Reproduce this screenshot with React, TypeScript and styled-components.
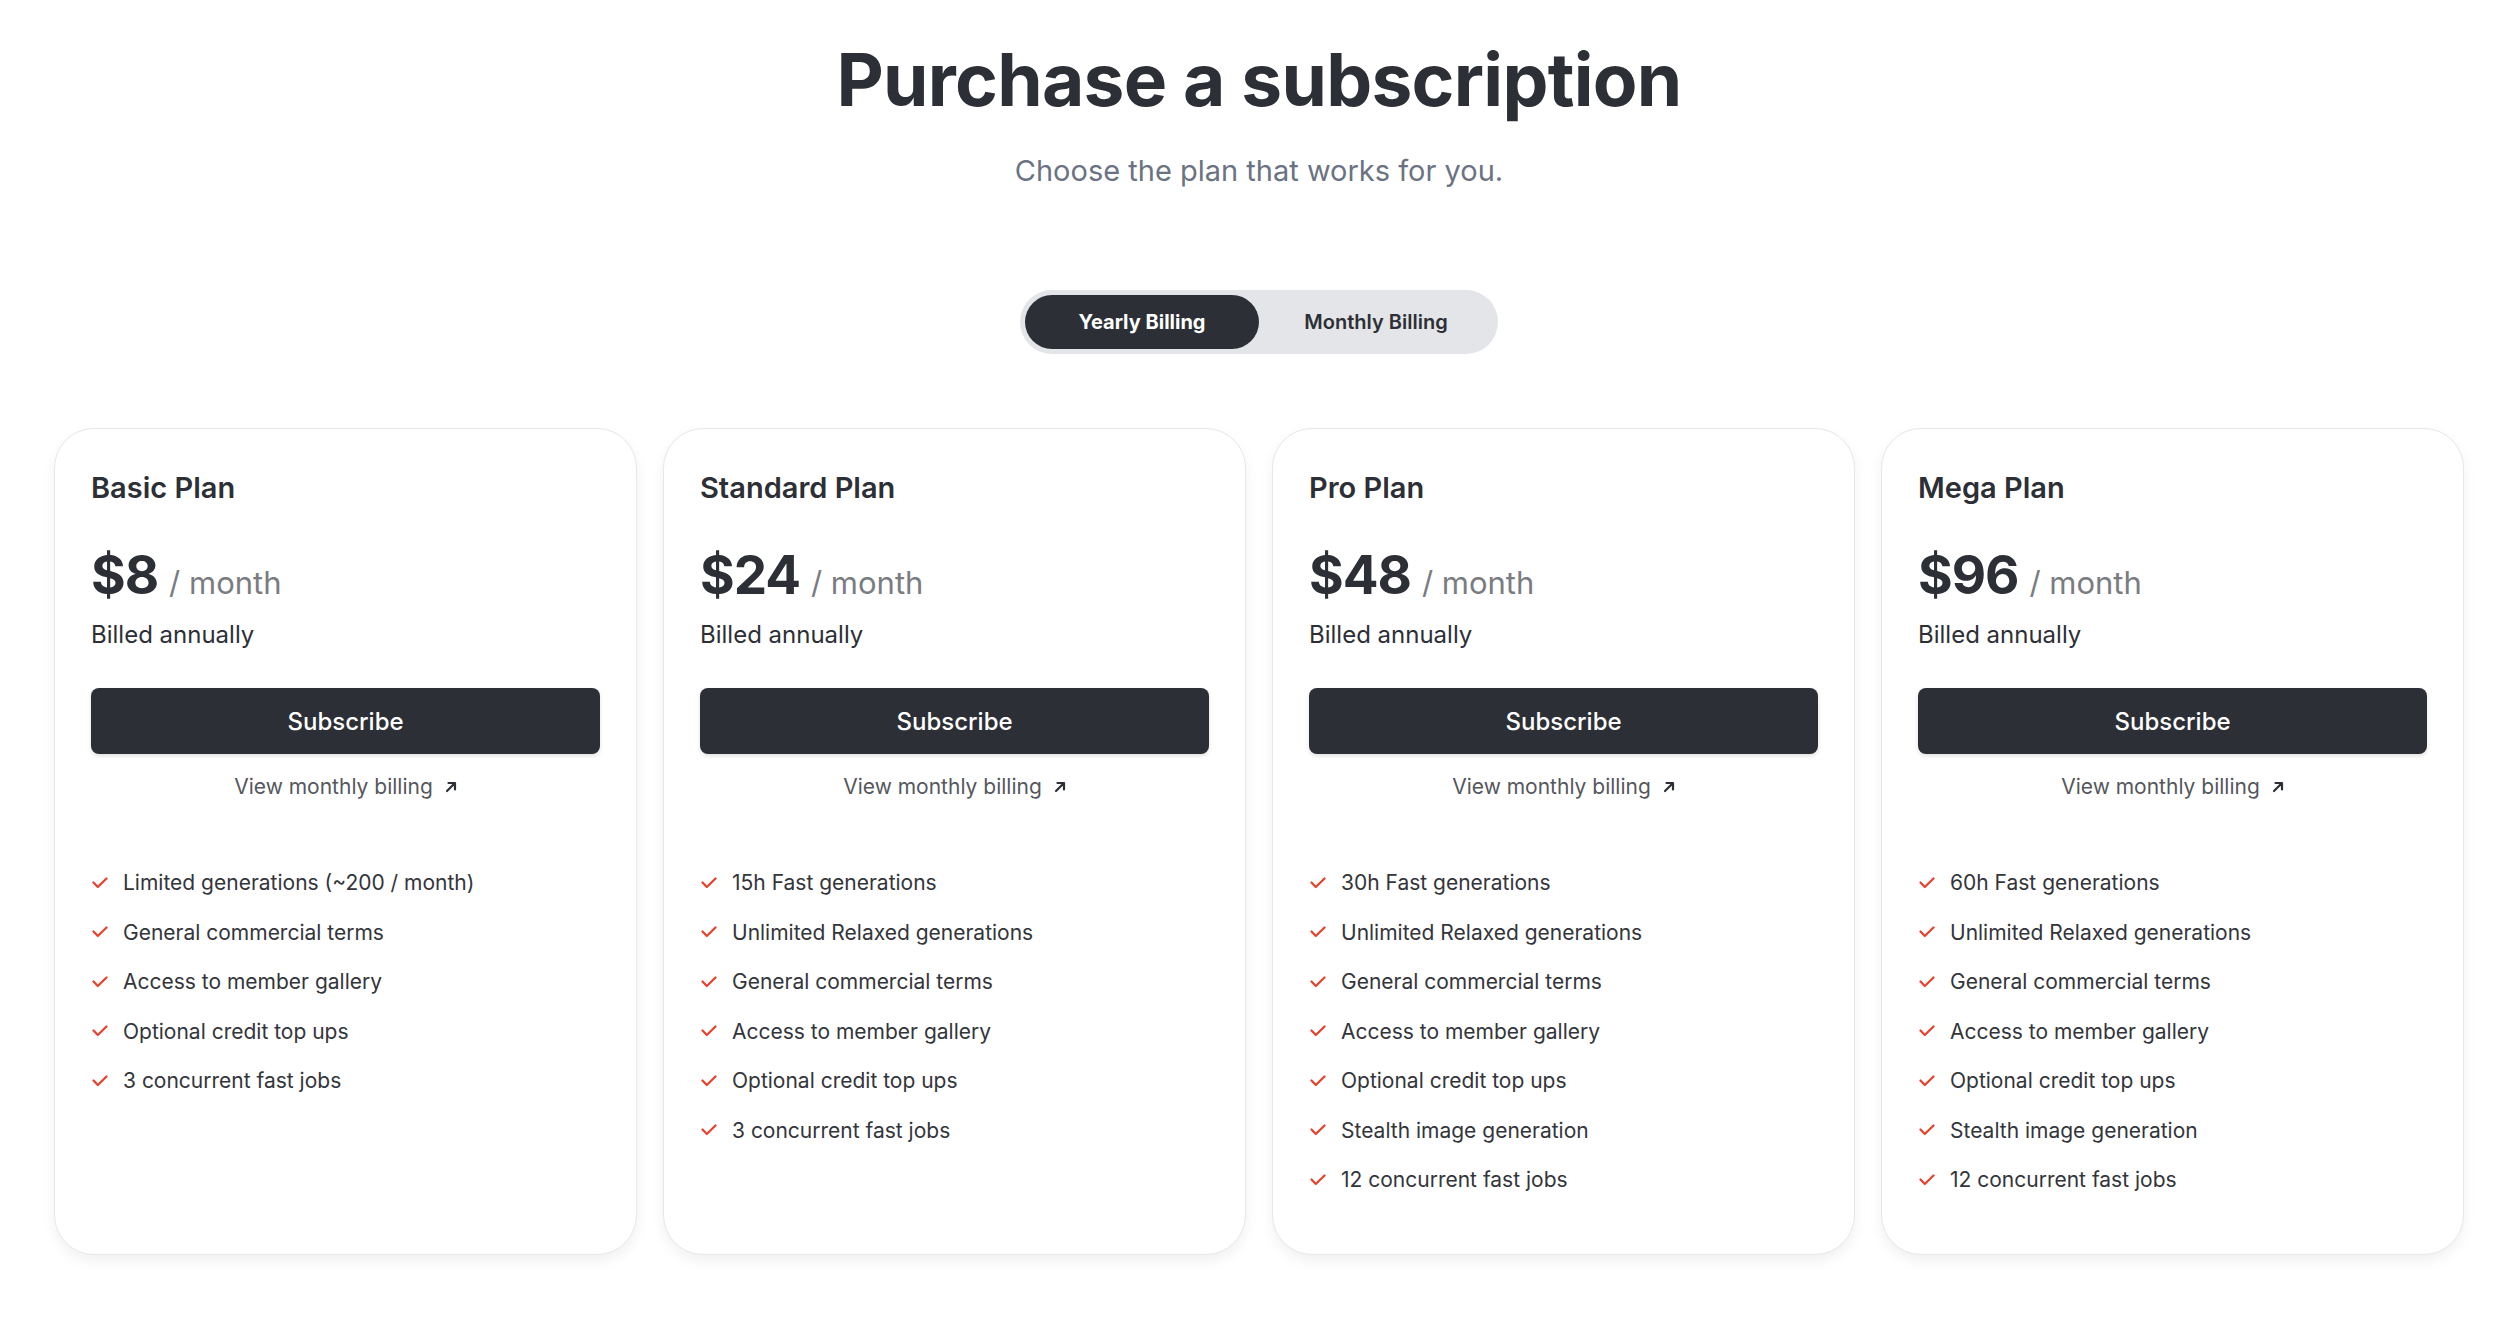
import React from 'react'
import styled, { createGlobalStyle } from 'styled-components'

const GlobalStyle = createGlobalStyle`
    * { box-sizing: border-box; }
    body {
        margin: 0;
        background: #ffffff;
        font-family: Inter, "Noto Sans", sans-serif;
        color: #2d2f36;
    }
`

type Plan = {
    name: string
    price: number
    features: string[]
}

const common = ['General commercial terms', 'Access to member gallery', 'Optional credit top ups']

const plans: Plan[] = [
    {
        name: 'Basic Plan',
        price: 8,
        features: ['Limited generations (~200 / month)', ...common, '3 concurrent fast jobs'],
    },
    {
        name: 'Standard Plan',
        price: 24,
        features: ['15h Fast generations', 'Unlimited Relaxed generations', ...common, '3 concurrent fast jobs'],
    },
    {
        name: 'Pro Plan',
        price: 48,
        features: [
            '30h Fast generations',
            'Unlimited Relaxed generations',
            ...common,
            'Stealth image generation',
            '12 concurrent fast jobs',
        ],
    },
    {
        name: 'Mega Plan',
        price: 96,
        features: [
            '60h Fast generations',
            'Unlimited Relaxed generations',
            ...common,
            'Stealth image generation',
            '12 concurrent fast jobs',
        ],
    },
]

const CheckIcon = () => (
    <svg width="16" height="12" viewBox="0 0 16 12" fill="none">
        <path d="M1.5 5.5 L5.8 10 L14.5 1.5" stroke="currentColor" strokeWidth="2.2" strokeLinecap="round" strokeLinejoin="round" />
    </svg>
)

const ArrowIcon = () => (
    <svg width="12" height="12" viewBox="0 0 12 12" fill="none">
        <path d="M2 10 L9.5 2.5 M3.5 2 H10 V8.5" stroke="currentColor" strokeWidth="2.2" strokeLinecap="round" strokeLinejoin="round" />
    </svg>
)

const App = () => {
    return (
        <Page>
            <GlobalStyle />
            <Title>Purchase a subscription</Title>
            <Subtitle>Choose the plan that works for you.</Subtitle>
            <Toggle>
                <ToggleButton $active>Yearly Billing</ToggleButton>
                <ToggleButton>Monthly Billing</ToggleButton>
            </Toggle>
            <Cards>
                {plans.map((plan) => (
                    <Card key={plan.name}>
                        <PlanName>{plan.name}</PlanName>
                        <PriceRow>
                            <Price>${plan.price}</Price>
                            <Per>/ month</Per>
                        </PriceRow>
                        <Billed>Billed annually</Billed>
                        <SubscribeButton>Subscribe</SubscribeButton>
                        <MonthlyLink>
                            View monthly billing
                            <ArrowIcon />
                        </MonthlyLink>
                        <Features>
                            {plan.features.map((f) => (
                                <Feature key={f}>
                                    <CheckIcon />
                                    <span>{f}</span>
                                </Feature>
                            ))}
                        </Features>
                    </Card>
                ))}
            </Cards>
        </Page>
    )
}

const Page = styled.main`
    display: flex;
    flex-direction: column;
    align-items: center;
    padding: 37px 48px 60px 54px;
`

const Title = styled.h1`
    margin: 0;
    font-size: 73px;
    line-height: 86px;
    font-weight: 700;
    letter-spacing: -0.01em;
    color: #2d2f36;
`

const Subtitle = styled.p`
    margin: 28px 0 0;
    font-size: 29px;
    line-height: 40px;
    font-weight: 400;
    color: #6b7382;
`

const Toggle = styled.div`
    display: flex;
    margin-top: 99px;
    padding: 5px;
    border-radius: 999px;
    background: #e4e5e8;
`

const ToggleButton = styled.button<{ $active?: boolean }>`
    width: 234px;
    height: 54px;
    border: none;
    border-radius: 999px;
    font-family: inherit;
    font-size: 20px;
    font-weight: ${(p) => (p.$active ? 700 : 600)};
    color: ${(p) => (p.$active ? '#ffffff' : '#2d2f36')};
    background: ${(p) => (p.$active ? '#2d2f36' : 'transparent')};
    cursor: pointer;
`

const Cards = styled.section`
    display: grid;
    grid-template-columns: repeat(4, 1fr);
    gap: 26px;
    width: 100%;
    margin-top: 74px;
`

const Card = styled.article`
    display: flex;
    flex-direction: column;
    padding: 40px 36px 58px;
    border: 1px solid #e7e7e9;
    border-radius: 40px;
    background: #ffffff;
    box-shadow: 0 6px 14px rgba(0, 0, 0, 0.06);
`

const PlanName = styled.h2`
    margin: 0;
    font-size: 29px;
    line-height: 38px;
    font-weight: 600;
    color: #2d2f36;
`

const PriceRow = styled.div`
    display: flex;
    align-items: baseline;
    gap: 11px;
    margin-top: 35px;
`

const Price = styled.span`
    font-size: 53px;
    line-height: 66px;
    font-weight: 700;
    letter-spacing: -0.02em;
    color: #2d2f36;
`

const Per = styled.span`
    font-size: 31px;
    font-weight: 400;
    color: #7a7c82;
`

const Billed = styled.div`
    margin-top: 10px;
    font-size: 24px;
    line-height: 34px;
    color: #2d2f36;
`

const SubscribeButton = styled.button`
    height: 66px;
    margin-top: 36px;
    border: none;
    border-radius: 8px;
    background: #2d2f36;
    color: #ffffff;
    font-family: inherit;
    font-size: 24px;
    font-weight: 500;
    box-shadow: 0 2px 4px rgba(0, 0, 0, 0.12);
    cursor: pointer;
`

const MonthlyLink = styled.a`
    display: flex;
    align-items: center;
    justify-content: center;
    gap: 12px;
    margin-top: 19px;
    font-size: 21px;
    line-height: 28px;
    color: #55575d;
    text-decoration: none;

    svg {
        color: #2d2f36;
    }
`

const Features = styled.ul`
    display: flex;
    flex-direction: column;
    gap: 18px;
    margin: 66px 0 0;
    padding: 0;
    list-style: none;
`

const Feature = styled.li`
    display: flex;
    align-items: center;
    gap: 15px;
    padding-left: 1px;
    font-size: 21px;
    line-height: 31.5px;
    color: #33353b;

    svg {
        flex-shrink: 0;
        color: #e8402b;
    }
`

export default App
